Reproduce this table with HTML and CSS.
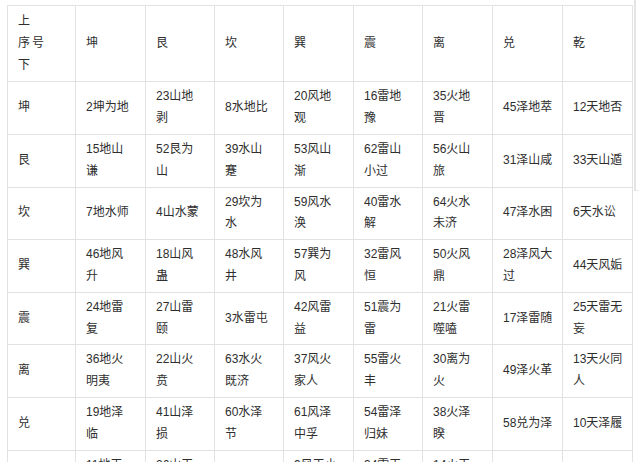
FILE: index.html
```html
<!DOCTYPE html>
<html lang="zh">
<head>
<meta charset="utf-8">
<title>六十四卦序号表</title>
<link rel="stylesheet" href="styles.css">
</head>
<body>
<div class="page">
<table class="gua">
<colgroup>
<col class="c0"><col class="c1"><col class="c2"><col class="c3"><col class="c4"><col class="c5"><col class="c6"><col class="c7"><col class="c8">
</colgroup>
<tr class="head"><td>上<br><span class="sp">序号</span><br>下</td><td>坤</td><td>艮</td><td>坎</td><td>巽</td><td>震</td><td>离</td><td>兑</td><td>乾</td></tr>
<tr><td>坤</td><td>2坤为地</td><td>23山地<br>剥</td><td>8水地比</td><td>20风地<br>观</td><td>16雷地<br>豫</td><td>35火地<br>晋</td><td>45泽地萃</td><td>12天地否</td></tr>
<tr><td>艮</td><td>15地山<br>谦</td><td>52艮为<br>山</td><td>39水山<br>蹇</td><td>53风山<br>渐</td><td>62雷山<br>小过</td><td>56火山<br>旅</td><td>31泽山咸</td><td>33天山遁</td></tr>
<tr><td>坎</td><td>7地水师</td><td>4山水蒙</td><td>29坎为<br>水</td><td>59风水<br>涣</td><td>40雷水<br>解</td><td>64火水<br>未济</td><td>47泽水困</td><td>6天水讼</td></tr>
<tr><td>巽</td><td>46地风<br>升</td><td>18山风<br>蛊</td><td>48水风<br>井</td><td>57巽为<br>风</td><td>32雷风<br>恒</td><td>50火风<br>鼎</td><td>28泽风大<br>过</td><td>44天风姤</td></tr>
<tr><td>震</td><td>24地雷<br>复</td><td>27山雷<br>颐</td><td>3水雷屯</td><td>42风雷<br>益</td><td>51震为<br>雷</td><td>21火雷<br>噬嗑</td><td>17泽雷随</td><td>25天雷无<br>妄</td></tr>
<tr><td>离</td><td>36地火<br>明夷</td><td>22山火<br>贲</td><td>63水火<br>既济</td><td>37风火<br>家人</td><td>55雷火<br>丰</td><td>30离为<br>火</td><td>49泽火革</td><td>13天火同<br>人</td></tr>
<tr><td>兑</td><td>19地泽<br>临</td><td>41山泽<br>损</td><td>60水泽<br>节</td><td>61风泽<br>中孚</td><td>54雷泽<br>归妹</td><td>38火泽<br>睽</td><td>58兑为泽</td><td>10天泽履</td></tr>
<tr><td>乾</td><td>11地天<br>泰</td><td>26山天<br>大畜</td><td>5水天需</td><td>9风天小<br>畜</td><td>34雷天<br>大壮</td><td>14火天<br>大有</td><td>43泽天夬</td><td>1乾为天</td></tr>
</table>
<div class="strip"></div>
</div>
</body>
</html>
```

FILE: styles.css
```css
html, body {
  margin: 0;
  padding: 0;
  background: #fff;
  overflow: hidden;
}
body {
  font-family: "Liberation Sans", "Noto Sans CJK SC", sans-serif;
  font-size: 12px;
  color: #2e2e2e;
}
.page {
  display: flex;
  align-items: flex-start;
  padding: 5px 0 0 7px;
}
.gua {
  border-collapse: collapse;
  table-layout: fixed;
  width: 626px;
  flex: none;
}
.c0 { width: 68px; }
.c1 { width: 70px; }
.c2 { width: 69px; }
.c3 { width: 69px; }
.c4 { width: 70px; }
.c5 { width: 69px; }
.c6 { width: 70px; }
.c7 { width: 70px; }
.c8 { width: 70px; }
.gua td {
  border: 1px solid #e2e2e2;
  padding: 4px 10px;
  line-height: 21.8px;
  vertical-align: middle;
  white-space: nowrap;
  text-align: left;
}
.gua .head td {
  padding-top: 5px;
  padding-bottom: 5px;
}
.gua tr:not(.head) td {
  height: 43.6px;
}
.sp {
  letter-spacing: 2px;
}
.strip {
  flex: none;
  width: 3px;
  height: 190px;
  margin-top: -5px;
  margin-left: 1px;
  border-left: 2px solid #e4e4e4;
  border-bottom: 1px solid #ececec;
}
```
